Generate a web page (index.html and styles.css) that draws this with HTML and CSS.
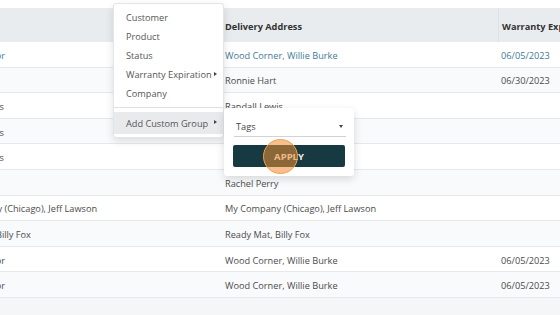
FILE: index.html
```html
<!DOCTYPE html>
<html lang="en">
<head>
    <meta charset="UTF-8">
    <meta name="viewport" content="width=device-width, initial-scale=1.0">
    <title>Warranties - Group By</title>
    <link rel="stylesheet" href="styles.css">
</head>
<body>
    <div class="screen">
        <div class="list">
            <div class="row head">
                <div class="cell">Customer</div>
                <div class="cell">Delivery Address</div>
                <div class="cell sep">Warranty Expiration</div>
            </div>
            <div class="row link">
                <div class="cell">Azure Interior</div>
                <div class="cell">Wood Corner, Willie Burke</div>
                <div class="cell">06/05/2023</div>
            </div>
            <div class="row">
                <div class="cell">Ronnie Hart</div>
                <div class="cell">Ronnie Hart</div>
                <div class="cell">06/30/2023</div>
            </div>
            <div class="row">
                <div class="cell">Randall Lewis</div>
                <div class="cell">Randall Lewis</div>
                <div class="cell"></div>
            </div>
            <div class="row">
                <div class="cell">Randall Lewis</div>
                <div class="cell">Randall Lewis</div>
                <div class="cell"></div>
            </div>
            <div class="row">
                <div class="cell">Randall Lewis</div>
                <div class="cell">Randall Lewis</div>
                <div class="cell"></div>
            </div>
            <div class="row">
                <div class="cell">Rachel</div>
                <div class="cell">Rachel Perry</div>
                <div class="cell"></div>
            </div>
            <div class="row">
                <div class="cell">My Company (Chicago), Jeff Lawson</div>
                <div class="cell">My Company (Chicago), Jeff Lawson</div>
                <div class="cell"></div>
            </div>
            <div class="row">
                <div class="cell">Ready Mat, Billy Fox</div>
                <div class="cell">Ready Mat, Billy Fox</div>
                <div class="cell"></div>
            </div>
            <div class="row">
                <div class="cell">Azure Interior</div>
                <div class="cell">Wood Corner, Willie Burke</div>
                <div class="cell">06/05/2023</div>
            </div>
            <div class="row">
                <div class="cell">Azure Interior</div>
                <div class="cell">Wood Corner, Willie Burke</div>
                <div class="cell">06/05/2023</div>
            </div>
        </div>

        <!-- group by dropdown -->
        <div class="menu">
            <div class="item">Customer</div>
            <div class="item">Product</div>
            <div class="item">Status</div>
            <div class="item">Warranty Expiration <span class="arrow"></span></div>
            <div class="item">Company</div>
            <div class="divider"></div>
            <div class="item active">Add Custom Group <span class="arrow"></span></div>
        </div>

        <div class="popover">
            <div class="select">
                <span>Tags</span>
                <span class="caret"></span>
            </div>
            <button class="apply">APPLY</button>
        </div>

        <div class="click"></div>
    </div>
</body>
</html>
```

FILE: styles.css
```css
body {
    margin: 0;
    font-family: 'Open Sans', sans-serif;
    font-size: 9.2px;
    color: #4c4c4c;
    background: #f5f6f8;
}

.screen {
    position: relative;
    width: 560px;
    height: 315px;
    overflow: hidden;
}

.list {
    background: #fff;
    padding-top: 8px;
}

.row {
    display: grid;
    grid-template-columns: 374px 274px 1fr;
    margin-left: -150px;
    width: 760px;
    height: 25.6px;
    box-sizing: border-box;
    align-items: center;
    border-bottom: 1px solid #e6e8eb;
    background: #fff;
}

.row:nth-child(odd) {
    background: #f9fafb;
}

.row.head {
    height: 34px;
    background: #e9ecef;
    border-bottom: none;
    font-weight: bold;
    color: #333;
}

.cell {
    padding: 2px 0 0 1px;
    box-sizing: border-box;
    white-space: nowrap;
    overflow: hidden;
    height: 100%;
    display: flex;
    align-items: center;
}

.head .cell {
    padding-top: 3px;
}

.row .cell:first-child {
    padding-left: 96px;
}

.head .cell.sep {
    border-left: 1px solid #dee2e6;
    padding-left: 2px;
}

.row .cell:nth-child(3) {
    padding-left: 3px;
}

.row.link {
    color: #3f7a99;
}

.menu {
    position: absolute;
    left: 113px;
    top: 3px;
    width: 111px;
    box-sizing: border-box;
    padding: 4px 0 3px;
    background: #fff;
    border: 1px solid #e3e5e8;
    border-radius: 3px;
    box-shadow: 0 3px 8px rgba(0, 0, 0, 0.12);
    color: #555;
}

.item {
    height: 19px;
    padding: 0 6px 0 12px;
    display: flex;
    align-items: center;
    justify-content: space-between;
    white-space: nowrap;
}

.item.active {
    height: 22px;
    background: #e9eaec;
}

.arrow {
    border-left: 3px solid #444;
    border-top: 2.5px solid transparent;
    border-bottom: 2.5px solid transparent;
    margin-top: -2px;
}

.divider {
    height: 1px;
    margin: 4px 0;
    background: #dfe1e4;
}

.popover {
    position: absolute;
    left: 224px;
    top: 108px;
    width: 130px;
    height: 68px;
    box-sizing: border-box;
    padding: 9px 8px 0 10px;
    background: #fff;
    border-radius: 3px;
    box-shadow: 0 3px 8px rgba(0, 0, 0, 0.14);
}

.select {
    height: 19px;
    display: flex;
    align-items: center;
    justify-content: space-between;
    padding: 0 3px 0 2px;
    border-bottom: 1px solid #cfd3d7;
    color: #444;
}

.caret {
    border-top: 3px solid #444;
    border-left: 2.5px solid transparent;
    border-right: 2.5px solid transparent;
}

.apply {
    display: block;
    width: 112px;
    height: 22px;
    margin: 8px 0 0 -1px;
    border: none;
    border-radius: 2px;
    background: #173a42;
    color: #f2f2f2;
    font-family: 'Open Sans', sans-serif;
    font-size: 9.5px;
    font-weight: bold;
}

.click {
    position: absolute;
    left: 263px;
    top: 139px;
    width: 33px;
    height: 33px;
    border-radius: 50%;
    border: 1.5px solid #f5a04a;
    background: rgba(236, 140, 50, 0.55);
}
```
